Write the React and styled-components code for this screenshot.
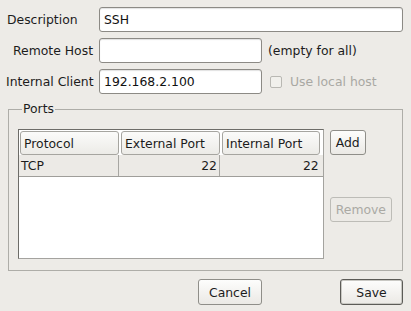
import React from 'react'
import styled, { createGlobalStyle } from 'styled-components'

const GlobalStyle = createGlobalStyle`
  html, body {
    margin: 0;
    padding: 0;
    background: #edebe7;
  }
  body {
    font-family: "DejaVu Sans", "Liberation Sans", sans-serif;
    font-size: 12.4px;
    color: #1c1c1c;
  }
`

const rows = [{ protocol: 'TCP', external: 22, internal: 22 }]

const App = () => {
  return (
    <Dialog>
      <GlobalStyle />
      <Form>
        <Label align='left'>Description</Label>
        <Input wide defaultValue='SSH' />
        <Label>Remote Host</Label>
        <Input defaultValue='' />
        <Hint>(empty for all)</Hint>
        <Label>Internal Client</Label>
        <Input defaultValue='192.168.2.100' />
        <CheckLabel>
          <Check />
          Use local host
        </CheckLabel>
      </Form>
      <Group>
        <Legend>Ports</Legend>
        <GroupBody>
          <Table>
            <HeaderRow>
              <HeaderCell>Protocol</HeaderCell>
              <HeaderCell>External Port</HeaderCell>
              <HeaderCell>Internal Port</HeaderCell>
            </HeaderRow>
            {rows.map((r) => (
              <DataRow key={r.protocol + r.external}>
                <Cell>{r.protocol}</Cell>
                <Cell numeric>{r.external}</Cell>
                <Cell numeric last>{r.internal}</Cell>
              </DataRow>
            ))}
          </Table>
          <SideButtons>
            <Button>Add</Button>
            <Button disabled>Remove</Button>
          </SideButtons>
        </GroupBody>
      </Group>
      <Footer>
        <Button footer>Cancel</Button>
        <Button footer primary>Save</Button>
      </Footer>
    </Dialog>
  )
}

const Dialog = styled.div`
  width: 411px;
  height: 311px;
  box-sizing: border-box;
  background: #edebe7;
  overflow: hidden;
`

const Form = styled.div`
  display: grid;
  grid-template-columns: 87px 163px 1fr;
  column-gap: 6px;
  row-gap: 6px;
  padding: 7px 8px 0 6px;
  align-items: center;
`

const Label = styled.label`
  text-align: ${(p) => (p.align === 'left' ? 'left' : 'right')};
  padding-left: ${(p) => (p.align === 'left' ? '1px' : '0')};
  white-space: nowrap;
`

const Input = styled.input`
  grid-column: ${(p) => (p.wide ? '2 / 4' : 'auto')};
  height: 25px;
  box-sizing: border-box;
  border: 1px solid #8c8a85;
  border-radius: 3px;
  background: #fff;
  box-shadow: inset 0 1px 1px rgba(0, 0, 0, 0.12);
  padding: 0 4px;
  font: inherit;
  color: #111;
  outline: none;
`

const Hint = styled.span`
  white-space: nowrap;
`

const CheckLabel = styled.span`
  display: flex;
  align-items: center;
  gap: 8px;
  margin-left: 2px;
  color: #a9a8a3;
  white-space: nowrap;
`

const Check = styled.span`
  width: 10px;
  height: 10px;
  border: 1px solid #b9b8b3;
  border-radius: 2px;
  background: #f1f0ec;
`

const Group = styled.fieldset`
  margin: 8px 8px 0 8px;
  padding: 13px 10px 11px 9px;
  border: 1px solid #aeada8;
  border-radius: 0;
  min-width: 0;
`

const Legend = styled.legend`
  padding: 0 1px;
  margin-left: 4px;
  line-height: 14px;
`

const GroupBody = styled.div`
  display: flex;
  gap: 6px;
`

const Table = styled.div`
  width: 306px;
  height: 130px;
  box-sizing: border-box;
  border: 1px solid;
  border-color: #6d6c68 #a4a39f #a4a39f #6d6c68;
  background: #fff;
  padding: 1px 1px 0 1px;
`

const HeaderRow = styled.div`
  display: grid;
  grid-template-columns: 99px 99px 98px;
  column-gap: 2px;
`

const HeaderCell = styled.div`
  height: 24px;
  box-sizing: border-box;
  border: 1px solid #a6a5a0;
  border-radius: 3px;
  background: linear-gradient(#fbfbfa, #ecebe7);
  padding: 0 3px;
  display: flex;
  align-items: center;
  white-space: nowrap;
  overflow: hidden;
`

const DataRow = styled.div`
  display: grid;
  grid-template-columns: 100px 101px 1fr;
  height: 21px;
  margin: 0 -1px;
  background: #eceae6;
  border-bottom: 1px solid #9f9e9a;
`

const Cell = styled.div`
  display: flex;
  align-items: center;
  justify-content: ${(p) => (p.numeric ? 'flex-end' : 'flex-start')};
  padding: 0 ${(p) => (p.last ? '4px' : '2px')} 0 2px;
  border-right: ${(p) => (p.last ? 'none' : '1px solid #a7a6a2')};
`

const SideButtons = styled.div`
  display: flex;
  flex-direction: column;
  align-items: flex-start;
  gap: 42px;
  padding-top: 1px;
`

const Button = styled.button`
  height: ${(p) => (p.footer ? '26px' : '25px')};
  min-width: ${(p) => (p.footer ? '63px' : '0')};
  padding: 0 ${(p) => (p.footer ? '10px' : '5px')};
  box-sizing: border-box;
  font: inherit;
  color: ${(p) => (p.disabled ? '#aaa9a4' : '#1c1c1c')};
  border: 1px solid ${(p) => (p.primary ? '#5c5b57' : p.disabled ? '#bdbcb7' : '#8f8e89')};
  border-radius: 3px;
  background: ${(p) => (p.disabled ? '#eceae6' : 'linear-gradient(#fdfdfc, #ebe9e5)')};
  box-shadow: ${(p) => (p.primary ? 'inset 0 0 0 1px #c9c8c3' : 'none')};
`

const Footer = styled.div`
  display: flex;
  justify-content: flex-end;
  gap: 78px;
  padding: 8px 8px 0 0;
`

export default App
